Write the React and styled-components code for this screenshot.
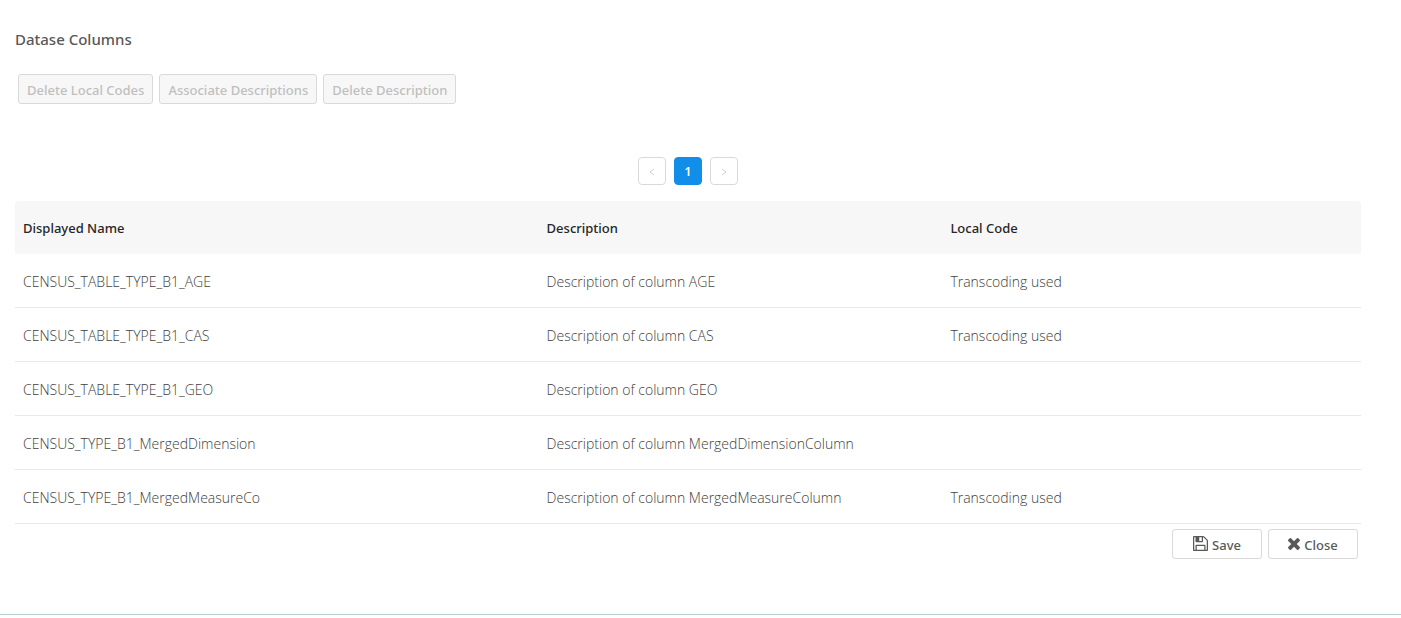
import React from 'react';
import styled, { createGlobalStyle } from 'styled-components';

const GlobalStyle = createGlobalStyle`
  *, *::before, *::after { box-sizing: border-box; }
  body {
    margin: 0;
    background: #fff;
    color: #595959;
    font-family: "Segoe UI", "Noto Sans", "Open Sans", sans-serif;
    font-size: 14px;
    line-height: 22px;
  }
`;

const Panel = styled.main`
  padding: 28px 40px 55px 15px;
  border-bottom: 1px solid #b6ced6;
`;

const Title = styled.h1`
  margin: 0;
  font-size: 15px;
  font-weight: 500;
  line-height: 22px;
`;

const ButtonBar = styled.div`
  display: flex;
  justify-content: ${({ $align }) => $align || 'flex-start'};
  gap: 6px;
  padding: 0 3px;
  margin-top: ${({ $space }) => $space}px;
`;

const Button = styled.button`
  display: flex;
  align-items: center;
  justify-content: center;
  gap: 4px;
  height: 30px;
  min-width: ${({ $wide }) => ($wide ? '90px' : '0')};
  padding: 1px 8px 0;
  border: 1px solid #d9d9d9;
  border-radius: 3px;
  background: #fff;
  color: #595959;
  font: inherit;
  font-size: 13px;
  font-weight: 500;
  cursor: pointer;

  &:disabled {
    background: #f7f7f7;
    color: #bfbfbf;
    cursor: not-allowed;
  }
`;

const Pagination = styled.nav`
  display: flex;
  justify-content: center;
  gap: 8px;
  margin: 53px 0 16px;
`;

const PageButton = styled.button`
  display: flex;
  align-items: center;
  justify-content: center;
  width: 28px;
  height: 28px;
  padding: 1px 0 0;
  border: 1px solid ${({ $active }) => ($active ? '#108ee9' : '#d9d9d9')};
  border-radius: 4px;
  background: ${({ $active }) => ($active ? '#108ee9' : '#fff')};
  color: ${({ $active }) => ($active ? '#fff' : '#d0d0d0')};
  font: inherit;
  font-size: 12px;
  font-weight: 600;
`;

const Table = styled.table`
  width: 100%;
  border-collapse: separate;
  border-spacing: 0;
  table-layout: fixed;
  text-align: left;
`;

const HeadCell = styled.th`
  width: ${({ $width }) => $width};
  height: 53px;
  padding: 0 8px;
  background: #f7f7f7;
  color: #262626;
  font-size: 13px;
  font-weight: 500;

  &:first-child { border-top-left-radius: 4px; }
  &:last-child { border-top-right-radius: 4px; }
`;

const Cell = styled.td`
  height: 54px;
  padding: 2px 8px 0;
  border-bottom: 1px solid #e9e9e9;
  color: #404040;
  font-family: "Segoe UI", "Open Sans", "Noto Sans", sans-serif;
  font-weight: 300;
  font-size: 14px;
`;

const Icon = styled.svg`
  width: ${({ $size }) => $size}px;
  height: ${({ $size }) => $size}px;
  fill: currentColor;
`;

const ButtonIcon = styled.span`
  display: flex;
  padding-bottom: 2px;
`;

const Chevron = styled.svg`
  width: 8px;
  height: 8px;
  fill: none;
  stroke: currentColor;
`;

const SaveIcon = () => (
  <Icon $size={15} viewBox="0 128 1536 1536" aria-hidden="true">
    <path d="M384 1536h768v-384h-768v384zM1280 1536h128v-896q0-14-10-38.5t-20-34.5l-281-281q-10-10-34-20t-39-10v416q0 40-28 68t-68 28h-576q-40 0-68-28t-28-68v-416h-128v1280h128v-416q0-40 28-68t68-28h832q40 0 68 28t28 68v416zM896 608v-320q0-13-9.5-22.5t-22.5-9.5h-192q-13 0-22.5 9.5t-9.5 22.5v320q0 13 9.5 22.5t22.5 9.5h192q13 0 22.5-9.5t9.5-22.5zM1536 640v928q0 40-28 68t-68 28h-1344q-40 0-68-28t-28-68v-1344q0-40 28-68t68-28h928q40 0 88 20t76 48l280 280q28 28 48 76t20 88z" />
  </Icon>
);

const CloseIcon = () => (
  <Icon $size={12} viewBox="302 366 1188 1188" aria-hidden="true">
    <path d="M1490 1322q0 40-28 68l-136 136q-28 28-68 28t-68-28l-294-294-294 294q-28 28-68 28t-68-28l-136-136q-28-28-28-68t28-68l294-294-294-294q-28-28-28-68t28-68l136-136q28-28 68-28t68 28l294 294 294-294q28-28 68-28t68 28l136 136q28 28 28 68t-28 68l-294 294 294 294q28 28 28 68z" />
  </Icon>
);

const rows = [
  ['CENSUS_TABLE_TYPE_B1_AGE', 'Description of column AGE', 'Transcoding used'],
  ['CENSUS_TABLE_TYPE_B1_CAS', 'Description of column CAS', 'Transcoding used'],
  ['CENSUS_TABLE_TYPE_B1_GEO', 'Description of column GEO', ''],
  ['CENSUS_TYPE_B1_MergedDimension', 'Description of column MergedDimensionColumn', ''],
  ['CENSUS_TYPE_B1_MergedMeasureCo', 'Description of column MergedMeasureColumn', 'Transcoding used'],
];

export default function App() {
  return (
    <>
      <GlobalStyle />
      <Panel>
        <Title>Datase Columns</Title>
        <ButtonBar $space={24}>
          <Button type="button" disabled>Delete Local Codes</Button>
          <Button type="button" disabled>Associate Descriptions</Button>
          <Button type="button" disabled>Delete Description</Button>
        </ButtonBar>
        <Pagination aria-label="Pages">
          <PageButton type="button" disabled aria-label="Previous page">
            <Chevron viewBox="0 0 8 8"><path d="M6 1L2 4l4 3" /></Chevron>
          </PageButton>
          <PageButton type="button" $active aria-current="page">1</PageButton>
          <PageButton type="button" disabled aria-label="Next page">
            <Chevron viewBox="0 0 8 8"><path d="M2 1l4 3-4 3" /></Chevron>
          </PageButton>
        </Pagination>
        <Table>
          <thead>
            <tr>
              <HeadCell $width="38.9%">Displayed Name</HeadCell>
              <HeadCell $width="30%">Description</HeadCell>
              <HeadCell $width="31.1%">Local Code</HeadCell>
            </tr>
          </thead>
          <tbody>
            {rows.map(([name, description, code]) => (
              <tr key={name}>
                <Cell>{name}</Cell>
                <Cell>{description}</Cell>
                <Cell>{code}</Cell>
              </tr>
            ))}
          </tbody>
        </Table>
        <ButtonBar $align="flex-end" $space={5}>
          <Button type="button" $wide><ButtonIcon><SaveIcon /></ButtonIcon>Save</Button>
          <Button type="button" $wide><ButtonIcon><CloseIcon /></ButtonIcon>Close</Button>
        </ButtonBar>
      </Panel>
    </>
  );
}
